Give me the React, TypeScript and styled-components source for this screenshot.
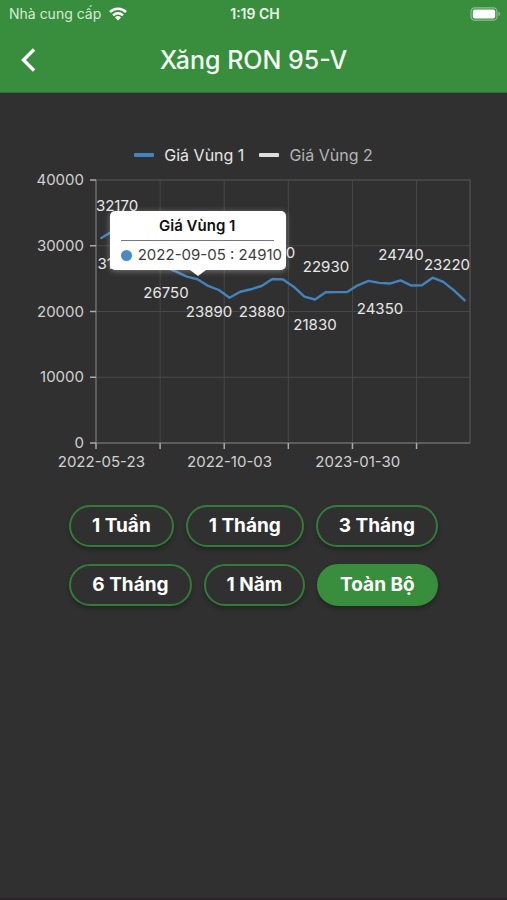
import React, { useState } from "react";
import styled, { createGlobalStyle } from "styled-components";

const GlobalStyle = createGlobalStyle`
  *, *::before, *::after { box-sizing: border-box; }
  body {
    margin: 0;
    background: #303030;
    font-family: Inter, "Liberation Sans", sans-serif;
  }
  button { font-family: inherit; }
`;

const Screen = styled.div`
  min-height: 100vh;
  display: flex;
  flex-direction: column;
  background: #303030;
  border-bottom: 2px solid #2b2529;
`;

const Header = styled.header`
  background: #388e3c;
  color: #fff;
  border-bottom: 1px solid #34703a;
`;

const StatusBar = styled.div`
  display: grid;
  grid-template-columns: 1fr auto 1fr;
  align-items: center;
  height: 27px;
  padding: 0 6px 0 9px;
`;

const Carrier = styled.div`
  display: flex;
  align-items: center;
  gap: 8px;
  font-size: 14px;
  color: #d7ead8;
`;

const Clock = styled.time`
  font-size: 14px;
  font-weight: 600;
  color: #eaf5ea;
`;

const BatteryIcon = styled.svg`
  justify-self: end;
`;

const TitleBar = styled.div`
  display: grid;
  grid-template-columns: 56px 1fr 56px;
  align-items: center;
  height: 65px;
`;

const BackButton = styled.button`
  display: grid;
  place-items: center;
  width: 56px;
  height: 56px;
  padding: 0;
  border: 0;
  background: none;
  color: #fff;
`;

const Title = styled.h1`
  margin: 0;
  font-size: 25px;
  line-height: 32px;
  font-weight: 500;
  text-align: center;
  color: #f4faf4;
`;

const Main = styled.main`
  display: flex;
  flex-direction: column;
  padding-top: 50px;
`;

const Legend = styled.div`
  display: flex;
  justify-content: center;
  gap: 15px;
  height: 24px;
`;

const LegendItem = styled.button<{ $line: string; $text: string }>`
  display: flex;
  align-items: center;
  gap: 10px;
  padding: 0;
  border: 0;
  background: none;
  font-size: 16px;
  color: ${(p) => p.$text};

  &::before {
    content: "";
    width: 20px;
    height: 4px;
    border-radius: 1px;
    background: ${(p) => p.$line};
  }
`;

const ChartBox = styled.div`
  position: relative;
`;

const ChartSvg = styled.svg`
  display: block;
  width: 100%;
  height: auto;
  font-size: 15px;
`;

const Tooltip = styled.div`
  position: absolute;
  left: 39%;
  top: 33%;
  transform: translate(-50%, -100%);
  width: 176px;
  height: 59px;
  padding: 5px 4px 0 11px;
  border-radius: 5px;
  background: #fff;
  color: #3d3d3d;
  font-size: 15px;
  box-shadow: 0 1px 6px rgba(255, 255, 255, 0.35);

  &::after {
    content: "";
    position: absolute;
    left: 50%;
    top: 100%;
    margin-left: -8px;
    border: 8px solid transparent;
    border-top: 6px solid #fff;
    border-bottom: 0;
  }
`;

const TooltipTitle = styled.div`
  margin-right: 8px;
  padding-bottom: 4px;
  border-bottom: 1px solid #777;
  font-size: 15px;
  line-height: 20px;
  font-weight: 600;
  text-align: center;
  color: #111;
`;

const TooltipRow = styled.div`
  display: flex;
  align-items: center;
  gap: 6px;
  line-height: 28px;
  white-space: nowrap;

  &::before {
    content: "";
    flex: none;
    width: 11px;
    height: 11px;
    border-radius: 50%;
    background: #4a8bc4;
  }
`;

const Ranges = styled.div`
  display: flex;
  flex-direction: column;
  align-items: center;
  gap: 17px;
  margin-top: 25px;
`;

const RangeRow = styled.div`
  display: flex;
  justify-content: center;
  gap: 12px;
`;

const RangeButton = styled.button<{ $active: boolean }>`
  height: 42px;
  padding: 0 21px;
  border: 2px solid ${(p) => (p.$active ? "#388e3c" : "#347a38")};
  border-radius: 21px;
  background: ${(p) => (p.$active ? "#388e3c" : "#303030")};
  box-shadow: 0 3px 4px rgba(0, 0, 0, 0.25);
  color: #fff;
  font-size: 19px;
  line-height: 24px;
  font-weight: 700;
  white-space: nowrap;
`;

const prices = [
  31170, 32170, 32800, 31900, 30200, 28400, 26750, 26070, 25300, 24910, 23890,
  23270, 22100, 23010, 23380, 23880, 24950, 24880, 23780, 22250, 21830, 22930,
  22950, 22970, 23980, 24650, 24350, 24250, 24740, 23950, 24000, 25140, 24500,
  23220, 21700,
];

const plot = { left: 96, right: 470, top: 13, bottom: 276 };
const step = (plot.right - plot.left) / prices.length;
const xAt = (i: number) => plot.left + step * (i + 0.5);
const yAt = (v: number) =>
  plot.bottom - (v / 40000) * (plot.bottom - plot.top);

const yTicks = [0, 10000, 20000, 30000, 40000];
const xTicks = [0, 6, 12, 18, 24, 30];
const dates = [
  { index: 0, text: "2022-05-23" },
  { index: 12, text: "2022-10-03" },
  { index: 24, text: "2023-01-30" },
];

const labels = [
  { value: 32170, x: 117, y: 44 },
  { value: 31170, x: 117, y: 102 },
  { value: 26750, x: 166, y: 131 },
  { value: 23890, x: 209, y: 150 },
  { value: 23880, x: 262, y: 150 },
  { value: 24880, x: 272, y: 91 },
  { value: 22930, x: 326, y: 105 },
  { value: 21830, x: 315, y: 163 },
  { value: 24740, x: 401, y: 93 },
  { value: 24350, x: 380, y: 147 },
  { value: 23220, x: 447, y: 103 },
];

function PriceChart() {
  const line = prices.map((v, i) => `${xAt(i)},${yAt(v)}`).join(" ");
  return (
    <ChartSvg viewBox="0 0 507 313" role="img" aria-label="Giá Vùng 1">
      <g stroke="#464849">
        {yTicks.slice(1, 4).map((v) => (
          <line key={v} x1={plot.left} x2={plot.right} y1={yAt(v)} y2={yAt(v)} />
        ))}
        {xTicks.slice(1).map((i) => {
          const x = plot.left + step * i;
          return <line key={i} x1={x} x2={x} y1={plot.top} y2={plot.bottom} />;
        })}
      </g>
      <rect
        x={plot.left}
        y={plot.top}
        width={plot.right - plot.left}
        height={plot.bottom - plot.top}
        fill="none"
        stroke="#595959"
      />
      <path
        d={`M${plot.left} ${plot.top}V${plot.bottom}H${plot.right}`}
        fill="none"
        stroke="#777"
      />
      <g stroke="#aaa" strokeWidth="1.5">
        {yTicks.map((v) => (
          <line key={v} x1={plot.left - 6} x2={plot.left} y1={yAt(v)} y2={yAt(v)} />
        ))}
        {xTicks.map((i) => {
          const x = plot.left + step * i;
          return <line key={i} x1={x} x2={x} y1={plot.bottom} y2={plot.bottom + 6} />;
        })}
      </g>
      <g fill="#d0d0d0" textAnchor="end">
        {yTicks.map((v) => (
          <text key={v} x="84" y={yAt(v) + 5}>
            {v}
          </text>
        ))}
      </g>
      <g fill="#d0d0d0" textAnchor="middle">
        {dates.map((d) => (
          <text key={d.text} x={xAt(d.index)} y="300">
            {d.text}
          </text>
        ))}
      </g>
      <polyline
        points={line}
        fill="none"
        stroke="#4384bd"
        strokeWidth="2.4"
        strokeLinejoin="round"
        strokeLinecap="round"
      />
      <g fill="#e8e8e8" textAnchor="middle">
        {labels.map((l) => (
          <text key={l.value} x={l.x} y={l.y}>
            {l.value}
          </text>
        ))}
      </g>
    </ChartSvg>
  );
}

const rangeRows = [
  ["1 Tuần", "1 Tháng", "3 Tháng"],
  ["6 Tháng", "1 Năm", "Toàn Bộ"],
];

export default function App() {
  const [range, setRange] = useState("Toàn Bộ");
  return (
    <Screen>
      <GlobalStyle />
      <Header>
        <StatusBar>
          <Carrier>
            Nhà cung cấp
            <svg width="18" height="14" viewBox="0 0 18 14" aria-hidden="true">
              <g fill="none" stroke="#fff" strokeWidth="2.5">
                <path d="M1 5a11.300 11.300 0 0 1 16 0" />
                <path d="M4.100 8.300a7 7 0 0 1 9.800 0" />
              </g>
              <path d="M9 13.600 6 10.500a4.300 4.300 0 0 1 6 0Z" fill="#fff" />
            </svg>
          </Carrier>
          <Clock>1:19 CH</Clock>
          <BatteryIcon width="31" height="14" viewBox="0 0 31 14" aria-hidden="true">
            <rect x="1" y="0.8" width="26" height="12.4" rx="3.8" fill="none" stroke="#8fc192" strokeWidth="1.2" />
            <rect x="2.8" y="2.6" width="22.4" height="8.8" rx="2" fill="#fff" />
            <path d="M28.5 4.8c2 .8 2 3.6 0 4.4Z" fill="#8fc192" />
          </BatteryIcon>
        </StatusBar>
        <TitleBar>
          <BackButton type="button" aria-label="Quay lại">
            <svg width="16" height="24" viewBox="0 0 16 24" aria-hidden="true">
              <path d="M14 1.500 3.500 12 14 22.500" fill="none" stroke="currentColor" strokeWidth="3.400" />
            </svg>
          </BackButton>
          <Title>Xăng RON 95-V</Title>
        </TitleBar>
      </Header>
      <Main>
        <Legend>
          <LegendItem type="button" $line="#4384bd" $text="#e6e6e6">
            Giá Vùng 1
          </LegendItem>
          <LegendItem type="button" $line="#dedede" $text="#b5b5b5">
            Giá Vùng 2
          </LegendItem>
        </Legend>
        <ChartBox>
          <PriceChart />
          <Tooltip role="tooltip">
            <TooltipTitle>Giá Vùng 1</TooltipTitle>
            <TooltipRow>2022-09-05 : 24910</TooltipRow>
          </Tooltip>
        </ChartBox>
        <Ranges>
          {rangeRows.map((row) => (
            <RangeRow key={row[0]}>
              {row.map((name) => (
                <RangeButton
                  key={name}
                  type="button"
                  $active={name === range}
                  aria-pressed={name === range}
                  onClick={() => setRange(name)}
                >
                  {name}
                </RangeButton>
              ))}
            </RangeRow>
          ))}
        </Ranges>
      </Main>
    </Screen>
  );
}
